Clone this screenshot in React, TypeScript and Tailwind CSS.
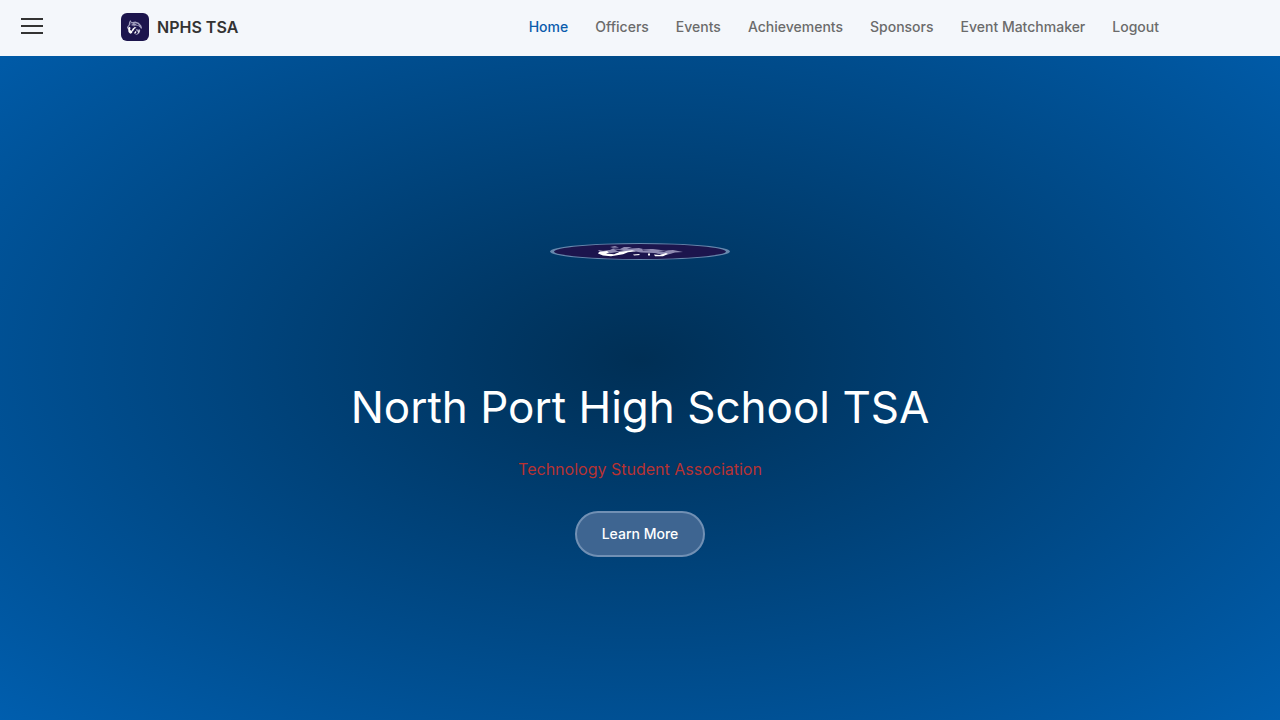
const links = ["Home", "Officers", "Events", "Achievements", "Sponsors", "Event Matchmaker", "Logout"];

function Wildcat({ className }: { className: string }) {
  return (
    <svg viewBox="0 0 64 64" className={className} aria-hidden="true">
      <g fill="#a3a1c0">
        <path d="M8 14 13 4l6 9 14-3 14 5 10 11 3 9-3 5-5-7-9-6-10-1-4 5-7-5-8-2-7 6-5 8-3 6 1-12 7-9z" />
        <path d="m36 40 10 3 4-3 3 7-4 10-9 6-8-1 8-3 5-7-7-4z" />
      </g>
      <g fill="#1c154d">
        <path d="m13 10 4 7 9 2-7 3-10 7 5-9zM28 16l14 3 9 8-12-4zM24 26l7 1 3 4-7-1zM40 28l9 4-5 3z" />
      </g>
      <g fill="#fff">
        <path d="m4 35 7-4 3 5-2 8 7 3 3-8 9-7 7 3-8 4-3 6-5 4-2 7-7 3-7-7z" />
        <path d="m34 48 4 4-5 7-5-2zM46 48l4-4-1 8-6 6z" />
      </g>
    </svg>
  );
}

function DiscWildcat() {
  return (
    <svg viewBox="0 0 88 12" className="h-3 w-[88px]" aria-hidden="true">
      <g fill="#8f8bb2">
        <path d="M2 5h12l3-1.5 7 .5 4-2h8l-5 1.800 12-.8 4 1h10l12 1.500 8-.5 10 2-8 .5-7 2-14-1.500-13-.5-8-1.500-12 .5-10 1.500L4 7z" />
        <path d="m14 2 5-1 4 1.500-6 .3zM60 8l12-1 4 1-10 2z" />
      </g>
      <path fill="#1c154d" d="m18 4.500 10 .5-6 1.200zM46 4.500l9 .5-8 .6zM62 6l10-.5-4 1.200zM3 5.300l10-.2-6 1z" />
      <g fill="#fff">
        <path d="m3 7 8-1 2 1.500-3 1 8 .8 6-2.500 12-1.500 4 1-8 1-5 2-12 2-8-.8-5-2z" />
        <path d="m37 9.500 6-.5 1 1-6 .5zM52 8.500h2v2h-2zM58 9.500l6 .5 6-2 2 1-5 2.300h-8z" />
      </g>
    </svg>
  );
}

export default function App() {
  return (
    <div className="flex min-h-screen flex-col bg-[radial-gradient(ellipse_at_center,#002f55_0%,#005eae_100%)] font-['Inter',sans-serif]">
      <header className="sticky top-0 flex h-14 items-center bg-[#f4f7fb] px-5 pb-0.5">
        <button type="button" aria-label="Open menu" className="flex w-6 flex-col gap-[5px] px-px pb-0.5">
          <span className="h-0.5 w-full bg-[#333]" />
          <span className="h-0.5 w-full bg-[#333]" />
          <span className="h-0.5 w-full bg-[#333]" />
        </button>
        <div className="mx-auto flex w-full max-w-[1038px] items-center justify-between">
          <a href="#home" className="flex items-center gap-2 text-base font-semibold text-[#333]">
            <span className="flex size-7 items-center justify-center rounded-md bg-[#1c154d]">
              <Wildcat className="size-4" />
            </span>
            NPHS TSA
          </a>
          <nav className="flex gap-[27px] text-sm font-medium text-[#6b6b6b]">
            {links.map((l, i) => (
              <a key={l} href={`#${l.toLowerCase().replace(" ", "-")}`} className={i === 0 ? "text-[#0a5cad]" : ""}>
                {l}
              </a>
            ))}
          </nav>
        </div>
        <div className="w-6" />
      </header>
      <main className="-mt-14 flex flex-1 flex-col items-center justify-center pb-0.5">
        <div className="flex h-[180px] items-center">
          <div className="flex h-[17px] w-[180px] items-center justify-center rounded-[50%] border-x-4 border-y border-[#6688ad] bg-[#1c154d]">
            <DiscWildcat />
          </div>
        </div>
        <h1 className="mt-9 text-[44px] leading-[60px] font-normal text-white">North Port High School TSA</h1>
        <p className="mt-5 text-base leading-6 text-[#b83232]">Technology Student Association</p>
        <button type="button" className="mt-[30px] h-[46px] rounded-full border-2 border-[#7190b4] bg-[#3e6591] px-[25px] text-sm font-medium text-white">
          Learn More
        </button>
      </main>
    </div>
  );
}
